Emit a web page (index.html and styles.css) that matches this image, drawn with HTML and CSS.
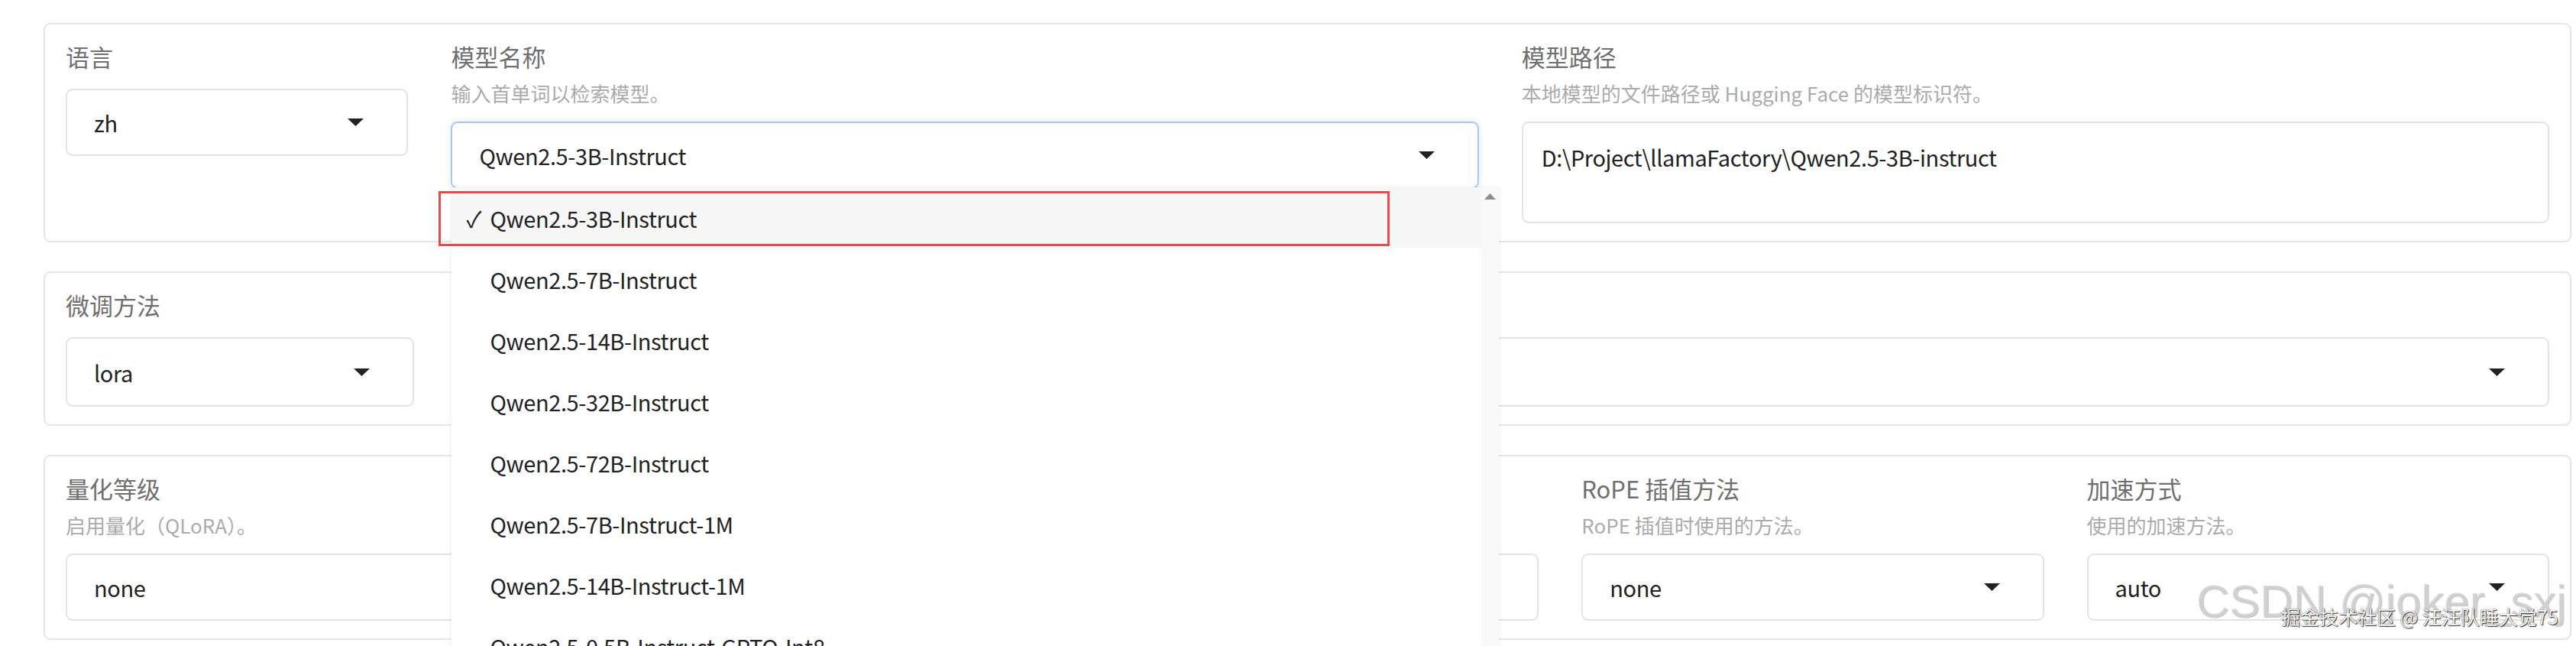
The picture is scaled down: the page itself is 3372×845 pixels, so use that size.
FILE: index.html
```html
<!DOCTYPE html>
<html lang="zh-CN">
<head>
  <meta charset="UTF-8" />
  <meta name="viewport" content="width=device-width, initial-scale=1" />
  <title>LLaMA Factory</title>
  <link rel="stylesheet" href="styles.css">
</head>
<body>
  <div class="page">

    <section class="panel row-top">
      <div class="field">
        <div class="label">语言</div>
        <div class="select">
          <span>zh</span>
          <svg class="caret" viewBox="0 0 21 10"><path d="M0 0h21L10.5 10z"/></svg>
        </div>
      </div>

      <div class="field">
        <div class="label">模型名称</div>
        <div class="info">输入首单词以检索模型。</div>
        <div class="select-wrap">
          <div class="select focused">
            <span>Qwen2.5-3B-Instruct</span>
            <svg class="caret" viewBox="0 0 21 10"><path d="M0 0h21L10.5 10z"/></svg>
          </div>
          <div class="options">
            <ul class="option-list">
              <li class="option selected">
                <span class="check">✓</span>Qwen2.5-3B-Instruct
                <span class="mark"></span>
              </li>
              <li class="option"><span class="check"></span>Qwen2.5-7B-Instruct</li>
              <li class="option"><span class="check"></span>Qwen2.5-14B-Instruct</li>
              <li class="option"><span class="check"></span>Qwen2.5-32B-Instruct</li>
              <li class="option"><span class="check"></span>Qwen2.5-72B-Instruct</li>
              <li class="option"><span class="check"></span>Qwen2.5-7B-Instruct-1M</li>
              <li class="option"><span class="check"></span>Qwen2.5-14B-Instruct-1M</li>
              <li class="option"><span class="check"></span>Qwen2.5-0.5B-Instruct-GPTQ-Int8</li>
            </ul>
            <div class="scroll-track">
              <svg class="scroll-up" viewBox="0 0 15 8"><path d="M7.5 0L15 8H0z"/></svg>
            </div>
          </div>
        </div>
      </div>

      <div class="field">
        <div class="label">模型路径</div>
        <div class="info">本地模型的文件路径或 Hugging Face 的模型标识符。</div>
        <div class="textbox">D:\Project\llamaFactory\Qwen2.5-3B-instruct</div>
      </div>
    </section>

    <section class="panel row-finetune">
      <div class="field">
        <div class="label">微调方法</div>
        <div class="select tall">
          <span>lora</span>
          <svg class="caret" viewBox="0 0 21 10"><path d="M0 0h21L10.5 10z"/></svg>
        </div>
      </div>
      <div class="field">
        <div class="label">检查点路径</div>
        <div class="select tall">
          <span></span>
          <svg class="caret" viewBox="0 0 21 10"><path d="M0 0h21L10.5 10z"/></svg>
        </div>
      </div>
    </section>

    <section class="panel row-quant">
      <div class="field">
        <div class="label">量化等级</div>
        <div class="info">启用量化（QLoRA）。</div>
        <div class="select">
          <span>none</span>
          <svg class="caret" viewBox="0 0 21 10"><path d="M0 0h21L10.5 10z"/></svg>
        </div>
      </div>
      <div class="field">
        <div class="label">量化方法</div>
        <div class="info">指定用于量化的算法。</div>
        <div class="select">
          <span>bitsandbytes</span>
          <svg class="caret" viewBox="0 0 21 10"><path d="M0 0h21L10.5 10z"/></svg>
        </div>
      </div>
      <div class="field">
        <div class="label">对话模板</div>
        <div class="info">构建提示词时使用的模板。</div>
        <div class="select">
          <span>qwen</span>
          <svg class="caret" viewBox="0 0 21 10"><path d="M0 0h21L10.5 10z"/></svg>
        </div>
      </div>
      <div class="field">
        <div class="label">RoPE 插值方法</div>
        <div class="info">RoPE 插值时使用的方法。</div>
        <div class="select">
          <span>none</span>
          <svg class="caret" viewBox="0 0 21 10"><path d="M0 0h21L10.5 10z"/></svg>
        </div>
      </div>
      <div class="field">
        <div class="label">加速方式</div>
        <div class="info">使用的加速方法。</div>
        <div class="select">
          <span>auto</span>
          <svg class="caret" viewBox="0 0 21 10"><path d="M0 0h21L10.5 10z"/></svg>
        </div>
      </div>
    </section>

    <div class="watermark-csdn">CSDN @joker_sxj</div>
    <div class="watermark-juejin">掘金技术社区 @ 汪汪队睡大觉75</div>
  </div>
</body>
</html>
```

FILE: styles.css
```css
html, body {
  margin: 0;
  padding: 0;
  overflow: hidden;
  background: #fff;
}
body {
  font-family: "Noto Sans CJK SC", "Noto Sans", sans-serif;
  color: #222;
}
.page {
  position: relative;
  padding: 30px 6px 0 57px;
}

/* blocks */
.panel {
  display: grid;
  gap: 56px;
  border: 2px solid #e6e6e6;
  border-radius: 9px;
  padding: 22px 27px 23px;
  margin-bottom: 38px;
}
.row-top {
  grid-template-columns: 1fr 3fr 3fr;
  align-items: start;
}
.row-finetune {
  grid-template-columns: 1fr 6fr;
}
.row-quant {
  grid-template-columns: repeat(5, 1fr);
}

.field {
  min-width: 0;
}
.label {
  font-size: 31px;
  line-height: 40px;
  color: #6f6f6f;
  margin-bottom: 22px;
  white-space: nowrap;
}
.label + .info {
  margin-top: -11px;
}
.info {
  font-size: 26px;
  line-height: 34px;
  color: #ababab;
  margin-bottom: 20px;
  white-space: nowrap;
}

/* dropdowns */
.select {
  display: flex;
  align-items: center;
  justify-content: space-between;
  box-sizing: border-box;
  height: 88px;
  padding: 0 56px 0 35px;
  border: 2px solid #e3e3e3;
  border-radius: 9px;
  background: #fff;
  font-size: 29px;
  letter-spacing: -0.4px;
  color: #222;
}
.select.tall {
  height: 91px;
}
.select.focused {
  border-color: #a7c8f0;
  box-shadow: 0 0 5px 3px rgba(120, 170, 235, 0.13);
}
.caret {
  width: 21px;
  height: 10px;
  fill: #222;
  flex-shrink: 0;
}

.select-wrap {
  position: relative;
}
.options {
  position: absolute;
  top: 86px;
  left: 1px;
  width: 1371px;
  display: flex;
  background: #fff;
  box-shadow: 0 0 5px rgba(0, 0, 0, 0.09);
  z-index: 10;
}
.option-list {
  list-style: none;
  margin: 0;
  padding: 0;
  flex: 1;
}
.option {
  position: relative;
  display: flex;
  align-items: center;
  height: 80px;
  padding-left: 19px;
  font-size: 29px;
  letter-spacing: -0.4px;
  color: #222;
  white-space: nowrap;
}
.option.selected {
  background: #f7f7f7;
}
.check {
  display: inline-block;
  width: 31px;
  font-size: 29px;
  letter-spacing: 0;
}
.mark {
  position: absolute;
  left: -17px;
  top: 5px;
  width: 1245px;
  height: 72px;
  box-sizing: border-box;
  border: 3px solid #e84a4d;
}
.scroll-track {
  width: 23px;
  background: #f9f9f9;
  display: flex;
  justify-content: center;
  align-items: flex-start;
}
.scroll-up {
  width: 15px;
  height: 8px;
  margin-top: 8px;
  fill: #8c8c8c;
}

.textbox {
  box-sizing: border-box;
  height: 133px;
  padding: 24px 24px;
  border: 2px solid #e3e3e3;
  border-radius: 9px;
  font-size: 29px;
  letter-spacing: -0.4px;
  line-height: 40px;
  color: #222;
}

/* image watermarks */
.watermark-csdn {
  position: absolute;
  left: 2875px;
  top: 757px;
  font-family: "Liberation Sans", Arial, sans-serif;
  font-size: 60px;
  line-height: 1;
  color: rgba(212, 212, 212, 0.78);
  text-shadow: 1px 1px 1px rgba(140, 140, 140, 0.5);
  white-space: nowrap;
}
.watermark-juejin {
  position: absolute;
  left: 2986px;
  top: 794px;
  font-size: 25px;
  line-height: 1;
  color: #f4f4f4;
  text-shadow: 0 0 1px #222, 1px 1px 1px #333;
  white-space: nowrap;
}
```
